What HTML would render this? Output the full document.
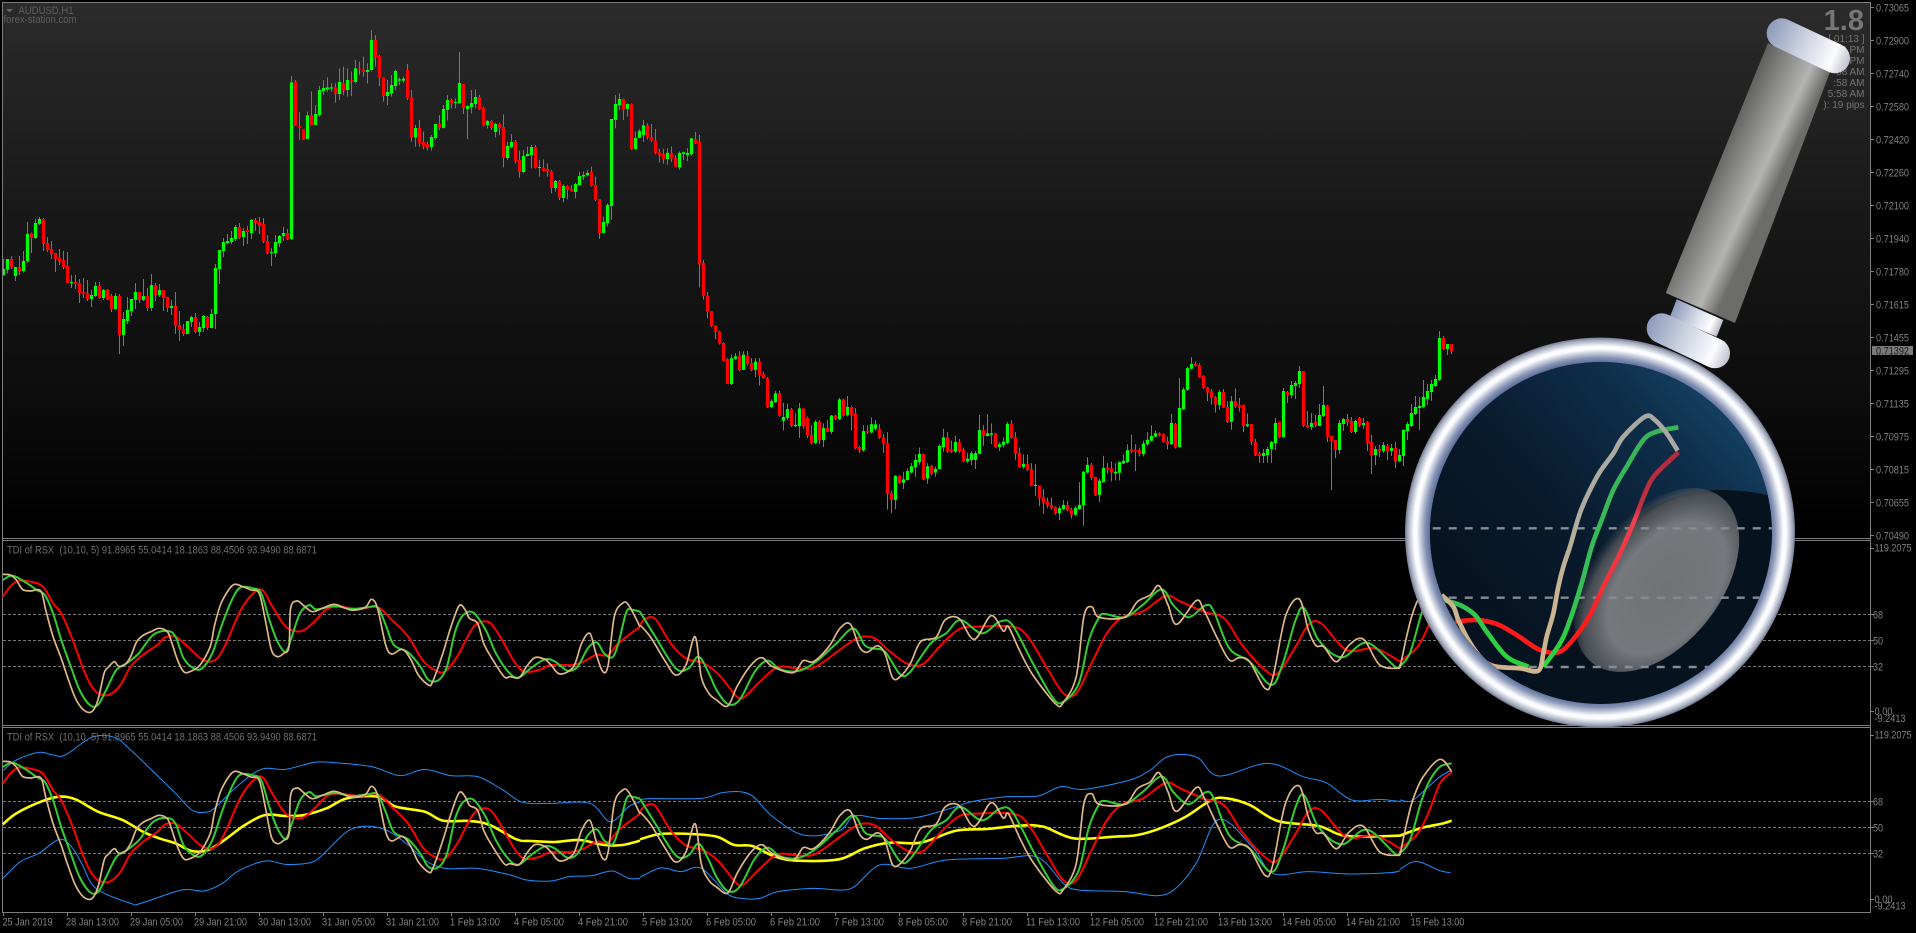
<!DOCTYPE html>
<html><head><meta charset="utf-8"><title>AUDUSD,H1</title>
<style>html,body{margin:0;padding:0;background:#000;width:1916px;height:933px;overflow:hidden}svg{display:block}text{font-family:"Liberation Sans",sans-serif}</style></head>
<body>
<svg id="chart" xmlns="http://www.w3.org/2000/svg" width="1916" height="933" viewBox="0 0 1916 933">
<defs>
<linearGradient id="bg" x1="0" y1="0" x2="0" y2="1"><stop offset="0" stop-color="#2c2b2c"/><stop offset=".38" stop-color="#191919"/><stop offset=".7" stop-color="#0e0e0e"/><stop offset="1" stop-color="#000"/></linearGradient>
<radialGradient id="ring" gradientUnits="userSpaceOnUse" cx="1600" cy="532.5" r="195"><stop offset=".87" stop-color="#5a6a94"/><stop offset=".897" stop-color="#8593b5"/><stop offset=".923" stop-color="#ccd1df"/><stop offset=".94" stop-color="#fbfcff"/><stop offset=".955" stop-color="#fbfcff"/><stop offset=".972" stop-color="#cdd1dc"/><stop offset=".988" stop-color="#a0a6ba"/><stop offset="1" stop-color="#70768c"/></radialGradient>
<linearGradient id="refl" gradientUnits="userSpaceOnUse" x1="1480" y1="640" x2="1740" y2="400"><stop offset="0" stop-color="#06121f"/><stop offset=".4" stop-color="#081a2c"/><stop offset=".77" stop-color="#0f2e4a"/><stop offset="1" stop-color="#154568"/></linearGradient>
<radialGradient id="blob" cx=".5" cy=".6" r=".6"><stop offset="0" stop-color="#707274"/><stop offset=".6" stop-color="#75787c"/><stop offset=".85" stop-color="#6a6c6e" stop-opacity=".65"/><stop offset="1" stop-color="#555" stop-opacity="0"/></radialGradient>
<linearGradient id="hnd" gradientUnits="userSpaceOnUse" x1="1768" y1="43" x2="1830" y2="72"><stop offset="0" stop-color="#5e5e5c"/><stop offset=".4" stop-color="#8e8e8c"/><stop offset=".72" stop-color="#b4b4b2"/><stop offset="1" stop-color="#6c6c6a"/></linearGradient>
<linearGradient id="cap1" gradientUnits="userSpaceOnUse" x1="1766" y1="26" x2="1850" y2="65"><stop offset="0" stop-color="#8896b8"/><stop offset=".45" stop-color="#cfd3e0"/><stop offset=".8" stop-color="#fcfcff"/><stop offset="1" stop-color="#b8bcc8"/></linearGradient>
<linearGradient id="cap2" gradientUnits="userSpaceOnUse" x1="1646" y1="321" x2="1730" y2="360"><stop offset="0" stop-color="#8896b8"/><stop offset=".45" stop-color="#cfd3e0"/><stop offset=".8" stop-color="#fcfcff"/><stop offset="1" stop-color="#b8bcc8"/></linearGradient>
<linearGradient id="neck" gradientUnits="userSpaceOnUse" x1="1676" y1="300" x2="1724" y2="322"><stop offset="0" stop-color="#8a98ba"/><stop offset=".6" stop-color="#e8eaf2"/><stop offset=".8" stop-color="#fdfdff"/><stop offset="1" stop-color="#b0b4c0"/></linearGradient>
<linearGradient id="mb" gradientUnits="userSpaceOnUse" x1="0" y1="280" x2="0" y2="1050"><stop offset="0" stop-color="#a9a8a4"/><stop offset=".42" stop-color="#b0ab9f"/><stop offset=".68" stop-color="#c8b493"/><stop offset="1" stop-color="#d0b48c"/></linearGradient>
<linearGradient id="mg" gradientUnits="userSpaceOnUse" x1="0" y1="320" x2="0" y2="1050"><stop offset="0" stop-color="#3ab35a"/><stop offset=".65" stop-color="#37bd58"/><stop offset=".9" stop-color="#2fd040"/></linearGradient>
<linearGradient id="mr" gradientUnits="userSpaceOnUse" x1="0" y1="400" x2="0" y2="1000"><stop offset="0" stop-color="#b02c3e"/><stop offset=".27" stop-color="#c03040"/><stop offset=".33" stop-color="#f04050"/><stop offset=".67" stop-color="#f0303a"/><stop offset=".83" stop-color="#ff1a1a"/></linearGradient>
<clipPath id="glass"><circle cx="1601" cy="533" r="171"/></clipPath>
<g id="tdi" fill="none">
<g transform="translate(0,530) scale(.40816,.33333)">
<polyline vector-effect="non-scaling-stroke" stroke="#f00" stroke-width="2" points="7,200 25,170 45,152 75,155 105,170 130,220 150,250 175,320 205,420 225,470 245,493 270,493 295,465 320,410 350,375 385,345 405,322 430,320 460,350 495,388 525,392 550,350 590,240 625,185 645,183 665,225 690,275 710,298 740,303 770,275 800,238 830,230 880,237 925,232 960,270 1000,320 1035,390 1065,420 1090,425 1120,380 1150,310 1170,280 1200,278 1230,330 1260,395 1285,425 1320,420 1350,405 1400,405 1430,395 1460,375 1490,375 1515,340 1568,290"/>
<polyline vector-effect="non-scaling-stroke" stroke="#32cd32" stroke-width="2" points="7,150 30,137 60,155 90,180 110,195 130,250 150,330 175,415 195,480 220,525 240,525 260,480 285,420 310,400 340,370 375,315 410,303 430,320 450,385 475,415 495,415 520,370 545,280 570,205 590,172 620,175 640,190 660,270 680,335 700,365 715,320 735,250 758,225 775,238 820,228 860,237 900,232 925,232 945,285 965,345 1000,367 1030,410 1050,450 1075,450 1095,410 1115,305 1135,255 1160,248 1190,300 1215,370 1245,425 1270,443 1300,415 1335,388 1360,395 1390,422 1415,410 1440,355 1462,337 1480,370 1500,382 1515,340 1535,245 1550,240 1568,245"/>
<polyline vector-effect="non-scaling-stroke" stroke="#deb887" stroke-width="1.7" points="7,133 25,135 40,150 55,178 75,183 100,183 112,240 130,320 150,385 165,440 185,505 205,540 225,545 240,510 255,430 265,412 280,395 290,408 305,405 320,380 335,335 352,315 370,305 390,295 410,305 420,335 435,390 450,425 465,425 490,405 515,350 525,290 540,225 560,180 575,163 595,170 615,180 635,190 650,270 665,360 680,380 695,370 708,350 712,235 728,213 745,228 765,245 790,235 820,223 860,240 895,232 910,208 925,235 945,345 960,372 985,358 1005,385 1025,435 1050,465 1060,455 1085,370 1105,290 1125,227 1140,240 1150,265 1170,280 1185,340 1205,385 1235,440 1250,440 1272,443 1290,410 1310,383 1335,388 1350,405 1372,432 1405,410 1425,340 1445,310 1460,370 1477,425 1490,405 1505,260 1525,220 1540,225 1568,290"/>
</g>
<g transform="translate(640,530) scale(.5102,.33333)">
<polyline vector-effect="non-scaling-stroke" stroke="#f00" stroke-width="2" points="0,285 10,267 30,267 60,340 90,385 125,400 155,435 190,500 205,500 235,455 270,412 310,415 345,410 400,350 430,322 460,325 490,365 525,402 555,402 590,345 625,298 660,290 730,290 760,320 800,420 830,490 855,490 885,400 915,310 945,262 985,245 1030,198 1060,215 1105,245 1145,265 1180,345 1225,420 1250,430 1285,350 1310,285 1335,280 1385,360 1440,355 1490,395"/>
<polyline vector-effect="non-scaling-stroke" stroke="#32cd32" stroke-width="2" points="0,245 30,320 70,415 95,415 115,380 135,430 150,480 172,522 195,510 225,425 250,392 275,418 310,423 345,395 385,340 418,295 440,345 455,355 480,365 510,433 530,425 570,340 600,310 628,270 670,310 705,275 730,285 770,400 810,505 830,515 860,460 880,330 900,262 912,252 950,262 985,225 1022,178 1045,225 1068,258 1082,258 1110,225 1125,245 1155,355 1195,395 1237,465 1260,400 1285,270 1302,235 1330,330 1375,382 1425,338 1480,410 1490,403"/>
<polyline vector-effect="non-scaling-stroke" stroke="#deb887" stroke-width="1.7" points="0,285 20,320 50,395 70,435 90,405 108,320 120,440 135,490 150,510 172,528 190,470 215,410 238,383 260,410 300,428 320,392 340,395 370,350 392,295 412,282 430,350 445,367 465,347 480,370 495,443 510,440 530,400 550,335 580,322 598,270 625,265 655,328 688,257 712,303 722,290 745,365 770,435 815,522 830,517 855,440 870,260 885,230 900,262 950,262 975,215 1000,195 1017,167 1035,225 1052,283 1090,212 1105,240 1130,320 1155,390 1175,383 1195,395 1225,475 1240,445 1265,260 1292,207 1310,300 1325,347 1340,350 1365,395 1390,345 1418,328 1450,405 1490,415"/>
</g>
<g transform="translate(1240,533) scale(.33333)">
<polyline vector-effect="non-scaling-stroke" stroke="#f00" stroke-width="2" points="480,385 530,345 565,280 600,190 635,157"/>
<polyline vector-effect="non-scaling-stroke" stroke="#32cd32" stroke-width="2" points="480,400 510,360 545,240 570,180 600,140 635,130"/>
<polyline vector-effect="non-scaling-stroke" stroke="#deb887" stroke-width="1.7" points="480,405 500,310 520,235 550,170 600,118 635,155"/>
</g>
</g>
</defs>
<rect width="1916" height="933" fill="#000"/>
<rect x="2" y="2" width="1868" height="536" fill="url(#bg)"/>

<!-- candles -->
<g fill="none" shape-rendering="crispEdges">
<g transform="translate(3.5,200) scale(4,.33333)">
<path stroke="#777" stroke-width=".25" d="M0 177V228M1 177V220M2 168V207M3 201V243M4 168V225M5 153V218M6 66V189M7 98V159M8 57V117M9 51V75M10 54V153M11 111V156M12 123V177M13 159V216M14 147V195M15 153V207M16 156V249M17 225V264M18 225V267M19 237V309M20 234V294M21 240V303M22 270V321M23 246V291M24 246V297M25 267V300M26 267V300M27 282V336M28 279V330M29 282V462M30 336V438M31 291V372M32 297V348M33 249V327M34 276V309M35 237V303M36 264V333M37 222V333M38 249V303M39 252V291M40 270V333M41 291V336M42 300V345M43 276V402M44 333V423M45 372V408M46 363V402M47 348V381M48 339V399M49 366V408M50 345V396M51 348V390M52 327V384M53 192V387M54 150V252M55 114V171M56 102V132M57 93V132M58 75V123M59 69V117M60 84V138M61 78V132M62 57V117M63 54V93M64 51V102M65 54V129M66 105V162M67 144V198M68 105V171M69 105V141M70 81V123M71 87V120"/>
<path stroke="#0f0" stroke-width=".8" d="M0 207V225M1 177V209M3 201V228M5 183V213M6 102V183M8 69V114M9 57V72M17 246V249M22 285V297M23 258V288M25 270V294M28 288V327M30 357V405M31 330V363M32 297V333M33 276V300M35 288V300M37 255V324M39 270V285M42 318V324M46 363V402M47 351V366M49 381V396M50 348V384M52 342V384M53 204V342M54 150V207M55 126V153M56 123V129M57 114V126M58 81V117M60 93V111M62 60V99M67 156V159M68 126V159M69 108V129M70 99V108"/>
<path stroke="#f00" stroke-width=".8" d="M2 177V202M4 201V214M7 101V114M10 57V132M11 129V150M12 147V162M13 159V177M14 174V183M15 180V201M16 198V249M18 246V252M19 249V279M20 276V282M21 279V297M24 258V294M26 270V297M27 288V327M29 288V405M34 276V300M36 288V324M38 255V285M40 270V294M41 291V324M43 318V378M44 375V390M45 387V402M48 351V396M51 351V384M59 81V114M61 90V96M63 60V69M64 66V78M65 72V126M66 123V159M71 99V117"/>
</g>
<g transform="translate(3.5,0) scale(4,.33333)">
<path stroke="#777" stroke-width=".25" d="M72 228V720M73 240V378M74 336V420M75 388V420M76 335V417M77 274V376M78 315V375M79 258V350M80 240V285M81 232V275M82 250V275M83 250V308M84 205V300M85 200V285M86 205V290M87 215V288M88 180V250M89 185V225M90 170V230M91 190V250M92 90V215M93 105V200M94 165V258M95 232V305M96 240V315M97 225V290M98 208V270M99 232V255M100 230V248M101 192V300M102 270V425M103 375V440M104 360V440M105 395V448M106 425V452M107 405V452M108 372V420M109 345V390M110 315V385M111 285V362M112 295V325M113 295V325M114 156V310M115 252V342M116 315V417M117 270V340M118 268V325M119 285V330M120 320V380M121 360V385M122 360V390M123 368V412M124 368V405M125 343V502M126 425V480M127 402V445M128 420V490M129 452V533M130 450V520M131 440V470M132 435V505M133 435V505M134 480V530M135 478V515M136 490V530M137 510V580M138 540V575M139 540V600M140 553V607M141 555V598M142 555V575M143 548V595M144 515V558M145 515V540M146 510V530M147 500V560M148 530V603M149 597V717M150 650V700M151 610V680M152 357V660M153 285V385M154 280V330M155 295V360M156 310V350M157 310V450M158 395V450"/>
<path stroke="#0f0" stroke-width=".8" d="M72 247V717M76 346V417M78 342V375M79 270V345M80 264V273M81 262V268M82 262V266M84 246V282M86 240V270M88 205V246M91 210V216M92 120V210M96 276V288M97 255V280M98 213V258M99 238V242M100 236V242M103 384V412M107 411V441M108 372V414M110 327V384M111 300V330M113 306V309M114 249V309M116 318V327M117 309V321M118 291V312M121 363V375M123 372V396M126 438V474M127 426V441M130 468V516M131 462V468M132 441V465M134 501V504M138 543V564M140 558V594M143 552V576M144 528V555M145 525V530M146 519V525M150 666V699M151 615V669M152 357V618M153 312V360M154 297V315M156 312V327M158 414V447"/>
<path stroke="#f00" stroke-width=".8" d="M73 244V378M74 378V384M75 388V419M77 346V376M83 262V282M85 250V272M87 240V243M89 205V208M90 208V216M93 120V172M94 168V233M95 232V288M101 210V295M102 292V412M104 384V430M105 426V440M106 432V444M109 372V384M112 300V310M115 252V324M119 291V327M120 324V375M122 363V384M124 372V384M125 381V474M128 426V483M129 480V516M133 441V504M135 503V513M136 507V515M137 513V564M139 543V594M141 558V570M142 567V573M147 516V558M148 555V600M149 597V699M155 297V330M157 312V447"/>
</g>
<g transform="translate(3.5,0) scale(4,.34435)">
<path stroke="#777" stroke-width=".25" d="M159 375V402M160 348V412M161 358V405M162 360V412M163 375V448M164 432V472M165 432V475M166 430V478M167 425V470M168 450V485M169 440V493M170 440V465M171 430V468M172 400V452M173 383V418M174 392V835M175 755V870M176 848V925M177 904V950M178 945V985M179 960V1000M180 994V1050M181 1040V1115M182 1030V1118M183 1025V1045M184 1020V1078M185 1020V1075M186 1020V1062M187 1040V1078M188 1040V1095M189 1040V1120M190 1080V1100M191 1095V1185M192 1160V1185M193 1135V1170M194 1135V1210M195 1170V1250M196 1172V1220M197 1185V1240M198 1200V1240M199 1170V1272M200 1186V1245M201 1210V1272M202 1235V1290M203 1220V1290M204 1220V1290M205 1230V1298M206 1220V1255M207 1205V1260M208 1205V1220M209 1155V1220M210 1158V1210M211 1150V1210M212 1180V1250M213 1185V1305M214 1295V1315M215 1235V1312M216 1235V1260M217 1212V1258M218 1220V1250M219 1232V1275M220 1260V1315M221 1255V1480M222 1425V1490M223 1380V1478M224 1380V1405M225 1370V1420M226 1360V1395M227 1345V1375M228 1320V1385M229 1300V1350M230 1318V1395M231 1345V1405M232 1350V1380M233 1355V1385M234 1290V1362M235 1245V1312M236 1255V1315M237 1280V1315M238 1265V1315M239 1275V1315M240 1300V1342M241 1315V1345M242 1310V1350M243 1310V1362M244 1205V1320M245 1235V1295M246 1203V1268M247 1230V1290M248 1257V1300M249 1285V1310M250 1270V1300M251 1225V1290M252 1220V1275M253 1255V1335M254 1300V1358M255 1320V1362M256 1320V1368M257 1345V1412M258 1348V1440M259 1410V1470M260 1420V1492M261 1445V1475M262 1445V1480M263 1470V1495M264 1470V1510M265 1452V1482M266 1455V1485M267 1475V1506M268 1470V1498M269 1400V1480M270 1368V1526M271 1328V1375M272 1345V1395M273 1385V1440M274 1390V1458M275 1324V1402M276 1345V1375M277 1340V1398M278 1345V1395M279 1340V1395M280 1320V1348M281 1290V1345M282 1262V1315M283 1290V1368M284 1300V1325M285 1280V1325M286 1255V1295M287 1235V1282M288 1250V1270M289 1255V1268M290 1258V1285M291 1268V1305M292 1202V1292M293 1228V1302M294 1098V1300M295 1125V1190M296 1065V1135M297 1037V1072M298 1050V1065M299 1055V1097M300 1090V1130M301 1123V1165M302 1130V1175M303 1150V1198M304 1132V1190M305 1130V1185M306 1165V1228M307 1150V1248M308 1128V1185M309 1155V1195M310 1175V1255M311 1200V1240"/>
<path stroke="#0f0" stroke-width=".8" d="M159 380V400M160 364V392M166 444V462M169 444V486M170 442V447M171 444V450M172 402V448M182 1040V1115M183 1035V1042M185 1030V1074M188 1050V1074M192 1165V1182M193 1142V1168M195 1211V1222M196 1188V1214M198 1234V1238M199 1186V1237M203 1225V1286M205 1243V1278M207 1207V1254M209 1160V1217M211 1182V1205M215 1252V1308M217 1232V1256M218 1232V1245M223 1382V1452M225 1392V1402M226 1368V1394M227 1354V1372M228 1336V1357M229 1318V1342M231 1354V1390M233 1362V1372M234 1295V1362M235 1270V1298M238 1284V1312M241 1332V1340M242 1316V1336M243 1316V1336M244 1249V1318M246 1258V1266M247 1258V1262M249 1290V1298M250 1283V1292M251 1231V1286M255 1347V1356M258 1408V1411M264 1476V1490M265 1466V1478M268 1475V1495M269 1466V1478M270 1370V1468M271 1350V1372M274 1396V1437M275 1359V1400M278 1370V1375M279 1342V1373M280 1338V1345M281 1307V1342M285 1288V1319M286 1277V1290M287 1266V1280M288 1258V1268M292 1228V1290M294 1185V1298M295 1131V1188M296 1069V1132M297 1057V1071M304 1138V1176M307 1165V1225M311 1232V1238"/>
<path stroke="#f00" stroke-width=".8" d="M161 364V400M162 398V408M163 408V444M164 442V450M165 447V462M167 444V460M168 458V484M173 404V416M174 412V768M175 764V860M176 860V905M177 904V947M178 945V964M179 962V998M180 996V1048M181 1043V1115M184 1033V1075M186 1033V1057M187 1054V1075M189 1050V1090M190 1087V1098M191 1098V1182M194 1142V1208M197 1188V1237M200 1186V1238M201 1214V1265M202 1263V1286M204 1225V1278M206 1243V1253M208 1207V1216M210 1160V1208M212 1182V1205M213 1200V1302M214 1298V1308M216 1251V1256M219 1245V1272M220 1270V1288M221 1286V1435M222 1432V1452M224 1382V1402M230 1318V1392M232 1354V1375M236 1270V1310M237 1305V1312M239 1284V1310M240 1306V1340M245 1249V1266M248 1259V1298M252 1231V1272M253 1270V1318M254 1316V1356M256 1347V1365M257 1362V1410M259 1410V1447M260 1443V1460M261 1456V1468M262 1466V1476M263 1472V1490M266 1466V1482M267 1480V1495M272 1350V1388M273 1385V1437M276 1359V1362M277 1360V1372M282 1306V1311M283 1307V1311M284 1307V1318M289 1258V1264M290 1261V1284M291 1281V1290M293 1231V1298M298 1057V1063M299 1060V1095M300 1092V1127M301 1125V1140M302 1137V1155M303 1153V1175M305 1138V1183M306 1182V1225M308 1165V1180M309 1176V1182M310 1175V1237"/>
</g>
<g transform="translate(3.5,320) scale(4,.33333)">
<path stroke="#777" stroke-width=".25" d="M312 312V375M313 357V408M314 395V428M315 387V429M316 380V428M317 363V429M318 294V390M319 306V354M320 204V354M321 213V249M322 183V234M323 183V237M324 138V204M325 153V321M326 273V324M327 279V330M328 285V321M329 252V318M330 198V291M331 255V366M332 348V510M333 360V414M334 300V402M335 294V333M336 282V318M337 291V339M338 300V342M339 291V321M340 294V327M341 303V393M342 345V462M343 378V435M344 375V411M345 366V399M346 372V420M347 372V408M348 366V444M349 387V426M350 327V438M351 306V360M352 252V321M353 228V285M354 231V330M355 180V264M356 192V255M357 180V243M358 165V201M359 33V183M360 48V90M361 72V105M362 72V102"/>
<path stroke="#0f0" stroke-width=".8" d="M315 399V408M316 387V405M317 366V387M318 309V369M320 213V351M322 195V225M323 189V198M324 153V192M327 309V321M329 285V318M330 255V288M334 309V390M335 297V312M338 303V336M340 309V315M343 387V405M345 375V393M347 384V393M349 405V423M350 330V408M351 312V333M352 279V318M353 261V282M354 258V264M355 231V261M356 213V237M357 192V216M358 177V198M359 54V180M361 72V87"/>
<path stroke="#f00" stroke-width=".8" d="M312 312V366M313 366V405M314 402V408M319 306V351M321 216V225M325 153V318M326 315V321M328 306V315M331 258V351M332 348V363M333 360V390M336 297V306M337 303V336M339 294V315M341 306V369M342 366V405M344 387V393M346 378V393M348 384V423M360 54V87M362 72V93"/>
</g>
</g>

<!-- panels -->
<rect x="3" y="539" width="1867" height="186" fill="#000"/>
<rect x="3" y="728" width="1867" height="184" fill="#000"/>
<!-- frame lines -->
<g fill="#7e7e7e" shape-rendering="crispEdges">
<rect x="2" y="2" width="1869" height="1"/>
<rect x="2" y="2" width="1" height="911"/>
<rect x="1870" y="2" width="1" height="911"/>
<rect x="2" y="538" width="1869" height="1"/>
<rect x="2" y="540" width="1869" height="1"/>
<rect x="2" y="725" width="1869" height="1"/>
<rect x="2" y="727" width="1869" height="1"/>
<rect x="2" y="912" width="1869" height="1"/>
</g>
<!-- dashed levels -->
<g stroke="#777" stroke-width="1" stroke-dasharray="3 2" shape-rendering="crispEdges" fill="none">
<path d="M3 614.5H1870M3 640.5H1870M3 666.5H1870M3 801.5H1870M3 827.5H1870M3 853.5H1870"/>
</g>
<!-- axis ticks -->
<g stroke="#7e7e7e" stroke-width="1" shape-rendering="crispEdges" fill="none">
<path d="M1871 7.5h3M1871 40.5h3M1871 73.5h3M1871 106.5h3M1871 139.5h3M1871 172.5h3M1871 205.5h3M1871 238.5h3M1871 271.5h3M1871 304.5h3M1871 337.5h3M1871 370.5h3M1871 403.5h3M1871 436.5h3M1871 469.5h3M1871 502.5h3M1871 535.5h3M1871 548.5h3M1871 614.5h3M1871 640.5h3M1871 666.5h3M1871 711.5h3M1871 735.5h3M1871 801.5h3M1871 827.5h3M1871 853.5h3M1871 899.5h3"/>
<path d="M3.5 912v4M67.5 912v4M131.5 912v4M195.5 912v4M259.5 912v4M323.5 912v4M387.5 912v4M451.5 912v4M515.5 912v4M579.5 912v4M643.5 912v4M707.5 912v4M771.5 912v4M835.5 912v4M899.5 912v4M963.5 912v4M1027.5 912v4M1091.5 912v4M1155.5 912v4M1219.5 912v4M1283.5 912v4M1347.5 912v4M1411.5 912v4"/>
</g>

<!-- indicator panel 1 -->
<use href="#tdi"/>
<!-- indicator panel 2 -->
<g fill="none">
<g transform="translate(0,530) scale(.40816,.33333)">
<polyline vector-effect="non-scaling-stroke" stroke="#1e90ff" stroke-width="1" points="7,722 40,690 95,667 130,675 160,675 225,622 280,622 320,660 380,730 430,790 470,840 500,847 525,835 580,770 640,718 700,718 770,697 820,698 910,710 980,737 1040,718 1105,737 1170,740 1230,778 1280,817 1350,820 1445,820 1495,875 1540,830 1568,815"/>
<polyline vector-effect="non-scaling-stroke" stroke="#1e90ff" stroke-width="1" points="7,1045 50,995 95,970 145,928 175,950 200,1000 235,1075 320,1120 345,1120 445,1080 500,1083 545,1060 585,1022 650,993 700,1003 760,998 790,975 860,898 935,895 1000,945 1040,990 1090,1015 1170,1015 1250,1035 1290,1050 1350,1053 1395,1040 1450,1037 1500,1023 1540,1045 1568,1045"/>
<polyline vector-effect="non-scaling-stroke" stroke="#ff0" stroke-width="2.6" points="7,883 40,850 100,815 145,800 185,808 240,845 300,870 350,905 390,925 430,940 470,963 510,960 550,930 600,885 650,855 700,858 745,855 800,835 850,805 925,800 970,830 1040,845 1085,872 1150,873 1200,885 1265,928 1300,933 1360,936 1420,930 1480,945 1525,945 1568,932"/>
</g>
<g transform="translate(640,530) scale(.5102,.33333)">
<polyline vector-effect="non-scaling-stroke" stroke="#1e90ff" stroke-width="1" points="0,810 20,806 120,805 165,787 215,793 260,860 320,915 390,903 420,858 470,865 540,863 620,830 650,815 720,800 780,798 825,770 870,778 960,750 1000,720 1030,683 1060,673 1095,685 1135,738 1230,700 1300,740 1345,758 1395,810 1450,808 1490,815"/>
<polyline vector-effect="non-scaling-stroke" stroke="#1e90ff" stroke-width="1" points="0,1042 40,1014 80,1025 120,1015 170,1090 200,1105 235,1105 270,1085 340,1075 390,1080 420,1070 470,1005 530,1015 600,990 710,985 780,982 830,1060 860,1080 950,1085 1015,1097 1050,1075 1090,1000 1135,868 1200,950 1240,1030 1310,1025 1390,1032 1470,1028 1490,1022"/>
<polyline vector-effect="non-scaling-stroke" stroke="#ff0" stroke-width="2.6" points="0,928 40,912 100,912 150,920 185,945 220,948 265,980 310,992 390,988 440,955 490,938 550,938 620,902 680,897 745,887 790,890 850,925 930,920 975,915 1020,895 1070,860 1120,810 1150,805 1195,825 1250,873 1330,888 1385,918 1490,917"/>
</g>
<g transform="translate(1240,720) scale(.33333)">
<polyline vector-effect="non-scaling-stroke" stroke="#1e90ff" stroke-width="1" points="480,240 515,243 560,205 600,170 635,150"/>
<polyline vector-effect="non-scaling-stroke" stroke="#1e90ff" stroke-width="1" points="480,448 515,427 545,428 600,452 632,458"/>
<polyline vector-effect="non-scaling-stroke" stroke="#ff0" stroke-width="2.6" points="480,347 540,325 610,310 635,302"/>
</g>
</g>
<use href="#tdi" y="187"/>

<!-- texts -->
<path d="M6 9h7l-3.5 3.5z" fill="#666"/>
<g fill="#5e5e5e" font-size="11">
<text x="18.5" y="14" textLength="55" lengthAdjust="spacingAndGlyphs">AUDUSD,H1</text>
<text x="3.5" y="23" textLength="73" lengthAdjust="spacingAndGlyphs">forex-station.com</text>
</g>
<text x="1864" y="30" font-size="29" font-weight="700" fill="#767676" text-anchor="end">1.8</text>
<g fill="#747474" font-size="10" text-anchor="end">
<text x="1864.5" y="42">[ 01:13 ]</text>
<text x="1864.5" y="53">7:58 PM</text>
<text x="1864.5" y="64">2:58 PM</text>
<text x="1864.5" y="75">58 AM</text>
<text x="1864.5" y="86">:58 AM</text>
<text x="1864.5" y="97">5:58 AM</text>
<text x="1864.5" y="108">): 19 pips</text>
</g>
<g fill="#707070" font-size="11">
<text x="7" y="553.5" textLength="310" lengthAdjust="spacingAndGlyphs" xml:space="preserve">TDI of RSX  (10,10, 5) 91.8965 55.0414 18.1863 88.4506 93.9490 88.6871</text>
<text x="7" y="740.5" textLength="310" lengthAdjust="spacingAndGlyphs" xml:space="preserve">TDI of RSX  (10,10, 5) 91.8965 55.0414 18.1863 88.4506 93.9490 88.6871</text>
</g>
<g fill="#808080" font-size="11">
<text x="1876" y="11.5" textLength="33" lengthAdjust="spacingAndGlyphs">0.73065</text><text x="1876" y="44.5" textLength="33" lengthAdjust="spacingAndGlyphs">0.72900</text><text x="1876" y="77.5" textLength="33" lengthAdjust="spacingAndGlyphs">0.72740</text><text x="1876" y="110.5" textLength="33" lengthAdjust="spacingAndGlyphs">0.72580</text><text x="1876" y="143.5" textLength="33" lengthAdjust="spacingAndGlyphs">0.72420</text><text x="1876" y="176.5" textLength="33" lengthAdjust="spacingAndGlyphs">0.72260</text><text x="1876" y="209.5" textLength="33" lengthAdjust="spacingAndGlyphs">0.72100</text><text x="1876" y="242.5" textLength="33" lengthAdjust="spacingAndGlyphs">0.71940</text><text x="1876" y="275.5" textLength="33" lengthAdjust="spacingAndGlyphs">0.71780</text><text x="1876" y="308.5" textLength="33" lengthAdjust="spacingAndGlyphs">0.71615</text><text x="1876" y="341.5" textLength="33" lengthAdjust="spacingAndGlyphs">0.71455</text><text x="1876" y="374.5" textLength="33" lengthAdjust="spacingAndGlyphs">0.71295</text><text x="1876" y="407.5" textLength="33" lengthAdjust="spacingAndGlyphs">0.71135</text><text x="1876" y="440.5" textLength="33" lengthAdjust="spacingAndGlyphs">0.70975</text><text x="1876" y="473.5" textLength="33" lengthAdjust="spacingAndGlyphs">0.70815</text><text x="1876" y="506.5" textLength="33" lengthAdjust="spacingAndGlyphs">0.70655</text><text x="1876" y="539.5" textLength="33" lengthAdjust="spacingAndGlyphs">0.70490</text>
<text x="1874.5" y="551.5" textLength="37" lengthAdjust="spacingAndGlyphs">119.2075</text><text x="1873" y="618.5" textLength="10" lengthAdjust="spacingAndGlyphs">68</text><text x="1873" y="644.5" textLength="10" lengthAdjust="spacingAndGlyphs">50</text><text x="1873" y="670.5" textLength="10" lengthAdjust="spacingAndGlyphs">32</text><text x="1874.5" y="715" textLength="18" lengthAdjust="spacingAndGlyphs">0.00</text><text x="1874.5" y="722" textLength="31" lengthAdjust="spacingAndGlyphs">-9.2413</text>
<text x="1874.5" y="738.5" textLength="37" lengthAdjust="spacingAndGlyphs">119.2075</text><text x="1873" y="805.5" textLength="10" lengthAdjust="spacingAndGlyphs">68</text><text x="1873" y="831.5" textLength="10" lengthAdjust="spacingAndGlyphs">50</text><text x="1873" y="857.5" textLength="10" lengthAdjust="spacingAndGlyphs">32</text><text x="1874.5" y="903" textLength="18" lengthAdjust="spacingAndGlyphs">0.00</text><text x="1874.5" y="909.5" textLength="31" lengthAdjust="spacingAndGlyphs">-9.2413</text>
</g>
<rect x="1872" y="346" width="41" height="9" fill="#7a7a7a"/>
<text x="1876" y="354.5" font-size="11" textLength="33" lengthAdjust="spacingAndGlyphs" fill="#1c1c1c">0.71392</text>
<g fill="#808080" font-size="11">
<text x="2.5" y="925.5" textLength="50" lengthAdjust="spacingAndGlyphs">25 Jan 2019</text><text x="66" y="925.5" textLength="53" lengthAdjust="spacingAndGlyphs">28 Jan 13:00</text><text x="130" y="925.5" textLength="53" lengthAdjust="spacingAndGlyphs">29 Jan 05:00</text><text x="194" y="925.5" textLength="53" lengthAdjust="spacingAndGlyphs">29 Jan 21:00</text><text x="258" y="925.5" textLength="53" lengthAdjust="spacingAndGlyphs">30 Jan 13:00</text><text x="322" y="925.5" textLength="53" lengthAdjust="spacingAndGlyphs">31 Jan 05:00</text><text x="386" y="925.5" textLength="53" lengthAdjust="spacingAndGlyphs">31 Jan 21:00</text><text x="450" y="925.5" textLength="50" lengthAdjust="spacingAndGlyphs">1 Feb 13:00</text><text x="514" y="925.5" textLength="50" lengthAdjust="spacingAndGlyphs">4 Feb 05:00</text><text x="578" y="925.5" textLength="50" lengthAdjust="spacingAndGlyphs">4 Feb 21:00</text><text x="642" y="925.5" textLength="50" lengthAdjust="spacingAndGlyphs">5 Feb 13:00</text><text x="706" y="925.5" textLength="50" lengthAdjust="spacingAndGlyphs">6 Feb 05:00</text><text x="770" y="925.5" textLength="50" lengthAdjust="spacingAndGlyphs">6 Feb 21:00</text><text x="834" y="925.5" textLength="50" lengthAdjust="spacingAndGlyphs">7 Feb 13:00</text><text x="898" y="925.5" textLength="50" lengthAdjust="spacingAndGlyphs">8 Feb 05:00</text><text x="962" y="925.5" textLength="50" lengthAdjust="spacingAndGlyphs">8 Feb 21:00</text><text x="1026" y="925.5" textLength="54" lengthAdjust="spacingAndGlyphs">11 Feb 13:00</text><text x="1090" y="925.5" textLength="54" lengthAdjust="spacingAndGlyphs">12 Feb 05:00</text><text x="1154" y="925.5" textLength="54" lengthAdjust="spacingAndGlyphs">12 Feb 21:00</text><text x="1218" y="925.5" textLength="54" lengthAdjust="spacingAndGlyphs">13 Feb 13:00</text><text x="1282" y="925.5" textLength="54" lengthAdjust="spacingAndGlyphs">14 Feb 05:00</text><text x="1346" y="925.5" textLength="54" lengthAdjust="spacingAndGlyphs">14 Feb 21:00</text><text x="1410.5" y="925.5" textLength="54" lengthAdjust="spacingAndGlyphs">15 Feb 13:00</text>
</g>

<!-- magnifier handle -->
<polygon points="1676.7,299.3 1723.3,320 1716.7,336.7 1670,316.7" fill="url(#neck)"/>
<polygon points="1768,43 1830,72 1735,323 1665.7,293" fill="url(#hnd)"/>
<path d="M1781.7 33.3L1835 58.3" stroke="url(#cap1)" stroke-width="30" stroke-linecap="round" fill="none"/>
<path d="M1661.7 328.3L1715 353.3" stroke="url(#cap2)" stroke-width="30" stroke-linecap="round" fill="none"/>
<!-- ring and glass -->
<circle cx="1600" cy="532.5" r="195" fill="url(#ring)"/>
<circle cx="1601" cy="533" r="171" fill="#06121e"/>
<g clip-path="url(#glass)">
<path d="M1425 355H1780V498C1735 486 1690 486 1650 508C1610 535 1590 590 1570 640C1550 690 1500 705 1425 705Z" fill="url(#refl)"/>
<ellipse cx="0" cy="0" rx="105" ry="65" fill="url(#blob)" transform="translate(1656.7,580) rotate(-52)"/>
<g fill="none" stroke="#858b92" stroke-width="2.4" stroke-dasharray="8 8"><path d="M1432.7 528.3H1775M1432.7 597.7H1775M1432.7 667H1775"/></g>
<g transform="translate(1400,320) scale(.33333)" fill="none" stroke-width="14" stroke-linejoin="miter">
<polyline stroke="url(#mr)" points="165,905 230,900 290,912 350,945 420,990 480,995 530,945 570,885 610,800 660,700 700,610 735,520 765,465 835,397"/>
<polyline stroke="url(#mg)" points="130,840 180,855 225,885 260,935 320,1010 385,1040"/>
<polyline stroke="url(#mg)" points="430,1040 480,970 510,900 545,790 575,680 605,600 640,510 680,440 730,360 770,335 835,322"/>
<polyline stroke="url(#mb)" points="125,825 160,860 175,900 205,960 240,1010 280,1038 360,1045 415,1052 430,1000 440,950 460,880 475,800 490,740 510,680 530,610 545,565 570,510 600,455 640,400 670,350 735,290 765,300 800,340 833,392"/>
</g>
</g>
</svg>
<script>
(function(){
  var NS='http://www.w3.org/2000/svg';
  var list=document.querySelectorAll('#chart polyline');
  for(var i=0;i<list.length;i++){
    var el=list[i],a=el.getAttribute('points').trim().split(/\s+/).map(function(s){return s.split(',').map(Number)});
    var d='M'+a[0][0]+' '+a[0][1];
    for(var j=0;j<a.length-1;j++){
      var p0=a[j-1]||a[j],p1=a[j],p2=a[j+1],p3=a[j+2]||p2;
      d+='C'+(p1[0]+(p2[0]-p0[0])/6).toFixed(1)+' '+(p1[1]+(p2[1]-p0[1])/6).toFixed(1)+' '+(p2[0]-(p3[0]-p1[0])/6).toFixed(1)+' '+(p2[1]-(p3[1]-p1[1])/6).toFixed(1)+' '+p2[0]+' '+p2[1];
    }
    var p=document.createElementNS(NS,'path');
    for(var k=0;k<el.attributes.length;k++){var at=el.attributes[k];if(at.name!=='points')p.setAttribute(at.name,at.value);}
    p.setAttribute('d',d);
    el.parentNode.replaceChild(p,el);
  }
})();
</script>
</body></html>
